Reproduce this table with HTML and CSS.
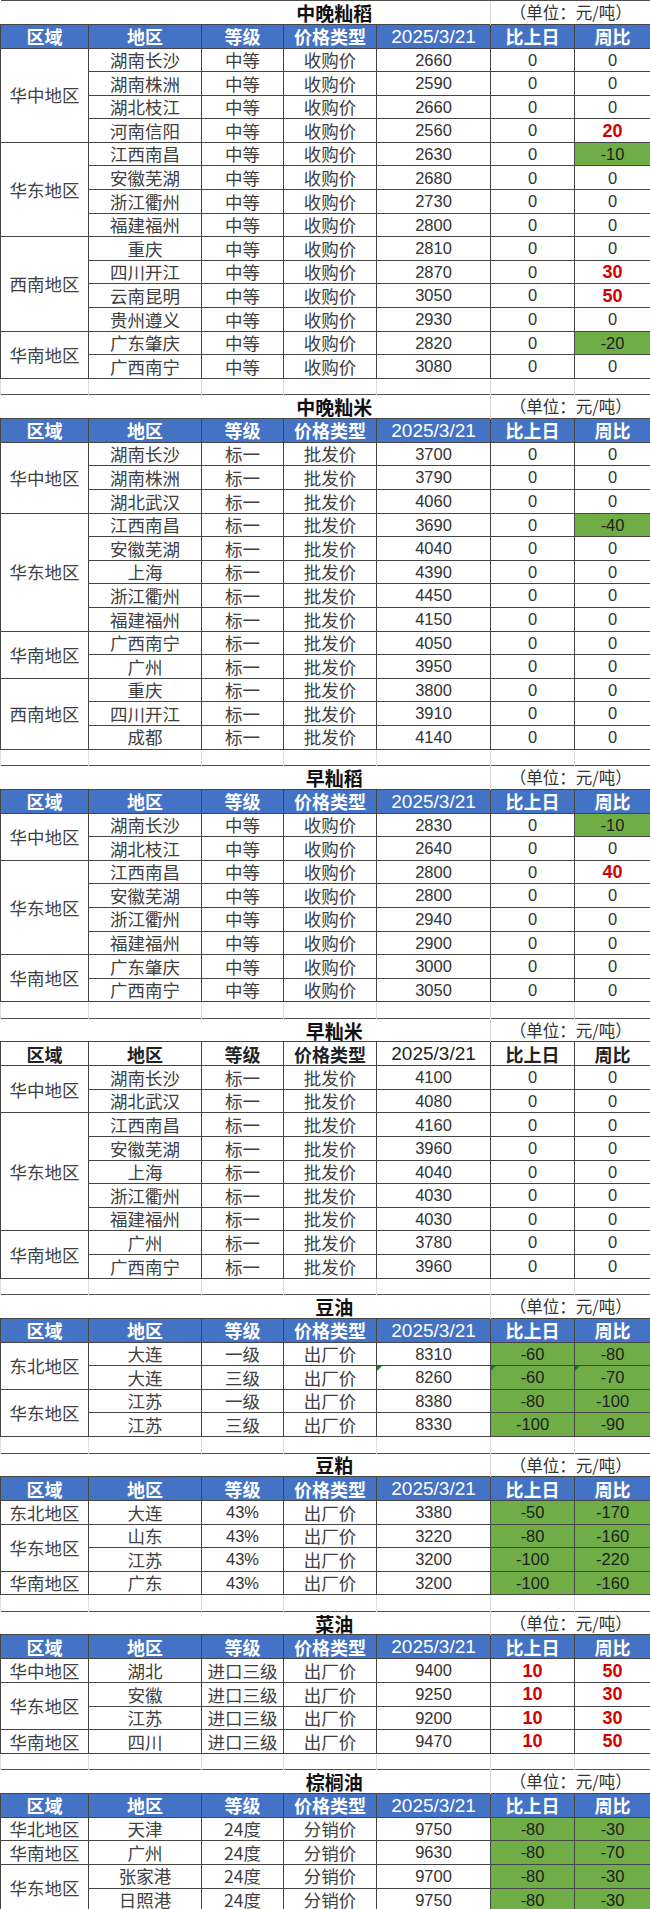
FILE: index.html
```html
<!DOCTYPE html>
<html lang="zh-CN">
<head>
<meta charset="utf-8">
<title>粮油价格</title>
<link rel="stylesheet" href="styles.css">
</head>
<body>
<table class="sheet">
<colgroup>
<col class="c-area"><col class="c-place"><col class="c-grade"><col class="c-type"><col class="c-price"><col class="c-day"><col class="c-week">
</colgroup>
<tbody>
<tr class="tt"><td colspan="5" class="ttl">中晚籼稻</td><td colspan="2" class="unit">（单位：元/吨）</td></tr>
<tr class="head"><td>区域</td><td>地区</td><td>等级</td><td>价格类型</td><td class="hd">2025/3/21</td><td>比上日</td><td>周比</td></tr>
<tr><td rowspan="4">华中地区</td><td>湖南长沙</td><td>中等</td><td>收购价</td><td class="n">2660</td><td class="n">0</td><td class="n">0</td></tr>
<tr><td>湖南株洲</td><td>中等</td><td>收购价</td><td class="n">2590</td><td class="n">0</td><td class="n">0</td></tr>
<tr><td>湖北枝江</td><td>中等</td><td>收购价</td><td class="n">2660</td><td class="n">0</td><td class="n">0</td></tr>
<tr><td>河南信阳</td><td>中等</td><td>收购价</td><td class="n">2560</td><td class="n">0</td><td class="n up">20</td></tr>
<tr><td rowspan="4">华东地区</td><td>江西南昌</td><td>中等</td><td>收购价</td><td class="n">2630</td><td class="n">0</td><td class="n dn">-10</td></tr>
<tr><td>安徽芜湖</td><td>中等</td><td>收购价</td><td class="n">2680</td><td class="n">0</td><td class="n">0</td></tr>
<tr><td>浙江衢州</td><td>中等</td><td>收购价</td><td class="n">2730</td><td class="n">0</td><td class="n">0</td></tr>
<tr><td>福建福州</td><td>中等</td><td>收购价</td><td class="n">2800</td><td class="n">0</td><td class="n">0</td></tr>
<tr><td rowspan="4">西南地区</td><td>重庆</td><td>中等</td><td>收购价</td><td class="n">2810</td><td class="n">0</td><td class="n">0</td></tr>
<tr><td>四川开江</td><td>中等</td><td>收购价</td><td class="n">2870</td><td class="n">0</td><td class="n up">30</td></tr>
<tr><td>云南昆明</td><td>中等</td><td>收购价</td><td class="n">3050</td><td class="n">0</td><td class="n up">50</td></tr>
<tr><td>贵州遵义</td><td>中等</td><td>收购价</td><td class="n">2930</td><td class="n">0</td><td class="n">0</td></tr>
<tr><td rowspan="2">华南地区</td><td>广东肇庆</td><td>中等</td><td>收购价</td><td class="n">2820</td><td class="n">0</td><td class="n dn">-20</td></tr>
<tr><td>广西南宁</td><td>中等</td><td>收购价</td><td class="n">3080</td><td class="n">0</td><td class="n">0</td></tr>
<tr class="gap"><td></td><td></td><td></td><td></td><td></td><td></td><td></td></tr>

<tr class="tt"><td colspan="5" class="ttl">中晚籼米</td><td colspan="2" class="unit">（单位：元/吨）</td></tr>
<tr class="head"><td>区域</td><td>地区</td><td>等级</td><td>价格类型</td><td class="hd">2025/3/21</td><td>比上日</td><td>周比</td></tr>
<tr><td rowspan="3">华中地区</td><td>湖南长沙</td><td>标一</td><td>批发价</td><td class="n">3700</td><td class="n">0</td><td class="n">0</td></tr>
<tr><td>湖南株洲</td><td>标一</td><td>批发价</td><td class="n">3790</td><td class="n">0</td><td class="n">0</td></tr>
<tr><td>湖北武汉</td><td>标一</td><td>批发价</td><td class="n">4060</td><td class="n">0</td><td class="n">0</td></tr>
<tr><td rowspan="5">华东地区</td><td>江西南昌</td><td>标一</td><td>批发价</td><td class="n">3690</td><td class="n">0</td><td class="n dn">-40</td></tr>
<tr><td>安徽芜湖</td><td>标一</td><td>批发价</td><td class="n">4040</td><td class="n">0</td><td class="n">0</td></tr>
<tr><td>上海</td><td>标一</td><td>批发价</td><td class="n">4390</td><td class="n">0</td><td class="n">0</td></tr>
<tr><td>浙江衢州</td><td>标一</td><td>批发价</td><td class="n">4450</td><td class="n">0</td><td class="n">0</td></tr>
<tr><td>福建福州</td><td>标一</td><td>批发价</td><td class="n">4150</td><td class="n">0</td><td class="n">0</td></tr>
<tr><td rowspan="2">华南地区</td><td>广西南宁</td><td>标一</td><td>批发价</td><td class="n">4050</td><td class="n">0</td><td class="n">0</td></tr>
<tr><td>广州</td><td>标一</td><td>批发价</td><td class="n">3950</td><td class="n">0</td><td class="n">0</td></tr>
<tr><td rowspan="3">西南地区</td><td>重庆</td><td>标一</td><td>批发价</td><td class="n">3800</td><td class="n">0</td><td class="n">0</td></tr>
<tr><td>四川开江</td><td>标一</td><td>批发价</td><td class="n">3910</td><td class="n">0</td><td class="n">0</td></tr>
<tr><td>成都</td><td>标一</td><td>批发价</td><td class="n">4140</td><td class="n">0</td><td class="n">0</td></tr>
<tr class="gap"><td></td><td></td><td></td><td></td><td></td><td></td><td></td></tr>

<tr class="tt"><td colspan="5" class="ttl">早籼稻</td><td colspan="2" class="unit">（单位：元/吨）</td></tr>
<tr class="head"><td>区域</td><td>地区</td><td>等级</td><td>价格类型</td><td class="hd">2025/3/21</td><td>比上日</td><td>周比</td></tr>
<tr><td rowspan="2">华中地区</td><td>湖南长沙</td><td>中等</td><td>收购价</td><td class="n">2830</td><td class="n">0</td><td class="n dn">-10</td></tr>
<tr><td>湖北枝江</td><td>中等</td><td>收购价</td><td class="n">2640</td><td class="n">0</td><td class="n">0</td></tr>
<tr><td rowspan="4">华东地区</td><td>江西南昌</td><td>中等</td><td>收购价</td><td class="n">2800</td><td class="n">0</td><td class="n up">40</td></tr>
<tr><td>安徽芜湖</td><td>中等</td><td>收购价</td><td class="n">2800</td><td class="n">0</td><td class="n">0</td></tr>
<tr><td>浙江衢州</td><td>中等</td><td>收购价</td><td class="n">2940</td><td class="n">0</td><td class="n">0</td></tr>
<tr><td>福建福州</td><td>中等</td><td>收购价</td><td class="n">2900</td><td class="n">0</td><td class="n">0</td></tr>
<tr><td rowspan="2">华南地区</td><td>广东肇庆</td><td>中等</td><td>收购价</td><td class="n">3000</td><td class="n">0</td><td class="n">0</td></tr>
<tr><td>广西南宁</td><td>中等</td><td>收购价</td><td class="n">3050</td><td class="n">0</td><td class="n">0</td></tr>
<tr class="gap"><td></td><td></td><td></td><td></td><td></td><td></td><td></td></tr>

<tr class="tt"><td colspan="5" class="ttl">早籼米</td><td colspan="2" class="unit">（单位：元/吨）</td></tr>
<tr class="head plain"><td>区域</td><td>地区</td><td>等级</td><td>价格类型</td><td class="hd">2025/3/21</td><td>比上日</td><td>周比</td></tr>
<tr><td rowspan="2">华中地区</td><td>湖南长沙</td><td>标一</td><td>批发价</td><td class="n">4100</td><td class="n">0</td><td class="n">0</td></tr>
<tr><td>湖北武汉</td><td>标一</td><td>批发价</td><td class="n">4080</td><td class="n">0</td><td class="n">0</td></tr>
<tr><td rowspan="5">华东地区</td><td>江西南昌</td><td>标一</td><td>批发价</td><td class="n">4160</td><td class="n">0</td><td class="n">0</td></tr>
<tr><td>安徽芜湖</td><td>标一</td><td>批发价</td><td class="n">3960</td><td class="n">0</td><td class="n">0</td></tr>
<tr><td>上海</td><td>标一</td><td>批发价</td><td class="n">4040</td><td class="n">0</td><td class="n">0</td></tr>
<tr><td>浙江衢州</td><td>标一</td><td>批发价</td><td class="n">4030</td><td class="n">0</td><td class="n">0</td></tr>
<tr><td>福建福州</td><td>标一</td><td>批发价</td><td class="n">4030</td><td class="n">0</td><td class="n">0</td></tr>
<tr><td rowspan="2">华南地区</td><td>广州</td><td>标一</td><td>批发价</td><td class="n">3780</td><td class="n">0</td><td class="n">0</td></tr>
<tr><td>广西南宁</td><td>标一</td><td>批发价</td><td class="n">3960</td><td class="n">0</td><td class="n">0</td></tr>
<tr class="gap"><td></td><td></td><td></td><td></td><td></td><td></td><td></td></tr>

<tr class="tt"><td colspan="5" class="ttl">豆油</td><td colspan="2" class="unit">（单位：元/吨）</td></tr>
<tr class="head"><td>区域</td><td>地区</td><td>等级</td><td>价格类型</td><td class="hd">2025/3/21</td><td>比上日</td><td>周比</td></tr>
<tr><td rowspan="2">东北地区</td><td>大连</td><td>一级</td><td>出厂价</td><td class="n">8310</td><td class="n dn">-60</td><td class="n dn">-80</td></tr>
<tr><td>大连</td><td>三级</td><td>出厂价</td><td class="n tri">8260</td><td class="n dn tri">-60</td><td class="n dn tri">-70</td></tr>
<tr><td rowspan="2">华东地区</td><td>江苏</td><td>一级</td><td>出厂价</td><td class="n">8380</td><td class="n dn">-80</td><td class="n dn">-100</td></tr>
<tr><td>江苏</td><td>三级</td><td>出厂价</td><td class="n">8330</td><td class="n dn">-100</td><td class="n dn">-90</td></tr>
<tr class="gap"><td></td><td></td><td></td><td></td><td></td><td></td><td></td></tr>

<tr class="tt"><td colspan="5" class="ttl">豆粕</td><td colspan="2" class="unit">（单位：元/吨）</td></tr>
<tr class="head"><td>区域</td><td>地区</td><td>等级</td><td>价格类型</td><td class="hd">2025/3/21</td><td>比上日</td><td>周比</td></tr>
<tr><td>东北地区</td><td>大连</td><td class="n">43%</td><td>出厂价</td><td class="n">3380</td><td class="n dn">-50</td><td class="n dn">-170</td></tr>
<tr><td rowspan="2">华东地区</td><td>山东</td><td class="n">43%</td><td>出厂价</td><td class="n">3220</td><td class="n dn">-80</td><td class="n dn">-160</td></tr>
<tr><td>江苏</td><td class="n">43%</td><td>出厂价</td><td class="n">3200</td><td class="n dn">-100</td><td class="n dn">-220</td></tr>
<tr><td>华南地区</td><td>广东</td><td class="n">43%</td><td>出厂价</td><td class="n">3200</td><td class="n dn">-100</td><td class="n dn">-160</td></tr>
<tr class="gap"><td></td><td></td><td></td><td></td><td></td><td></td><td></td></tr>

<tr class="tt"><td colspan="5" class="ttl">菜油</td><td colspan="2" class="unit">（单位：元/吨）</td></tr>
<tr class="head"><td>区域</td><td>地区</td><td>等级</td><td>价格类型</td><td class="hd">2025/3/21</td><td>比上日</td><td>周比</td></tr>
<tr><td>华中地区</td><td>湖北</td><td>进口三级</td><td>出厂价</td><td class="n">9400</td><td class="n up">10</td><td class="n up">50</td></tr>
<tr><td rowspan="2">华东地区</td><td>安徽</td><td>进口三级</td><td>出厂价</td><td class="n">9250</td><td class="n up">10</td><td class="n up">30</td></tr>
<tr><td>江苏</td><td>进口三级</td><td>出厂价</td><td class="n">9200</td><td class="n up">10</td><td class="n up">30</td></tr>
<tr><td>华南地区</td><td>四川</td><td>进口三级</td><td>出厂价</td><td class="n">9470</td><td class="n up">10</td><td class="n up">50</td></tr>
<tr class="gap"><td></td><td></td><td></td><td></td><td></td><td></td><td></td></tr>

<tr class="tt"><td colspan="5" class="ttl">棕榈油</td><td colspan="2" class="unit">（单位：元/吨）</td></tr>
<tr class="head"><td>区域</td><td>地区</td><td>等级</td><td>价格类型</td><td class="hd">2025/3/21</td><td>比上日</td><td>周比</td></tr>
<tr><td>华北地区</td><td>天津</td><td>24度</td><td>分销价</td><td class="n">9750</td><td class="n dn">-80</td><td class="n dn">-30</td></tr>
<tr><td>华南地区</td><td>广州</td><td>24度</td><td>分销价</td><td class="n">9630</td><td class="n dn">-80</td><td class="n dn">-70</td></tr>
<tr><td rowspan="2">华东地区</td><td>张家港</td><td>24度</td><td>分销价</td><td class="n">9700</td><td class="n dn">-80</td><td class="n dn">-30</td></tr>
<tr><td>日照港</td><td>24度</td><td>分销价</td><td class="n">9750</td><td class="n dn">-80</td><td class="n dn">-30</td></tr>
</tbody>
</table>
</body>
</html>
```

FILE: styles.css
```css
html, body {
  margin: 0;
  padding: 0;
  background: #ffffff;
}

.sheet {
  width: 650px;
  border-collapse: collapse;
  table-layout: fixed;
  font-family: "Noto Sans CJK SC", "Noto Sans", sans-serif;
  color: #404040;
}

.c-area { width: 88px; }
.c-place { width: 113px; }
.c-grade { width: 82px; }
.c-type { width: 93px; }
.c-price { width: 114px; }
.c-day { width: 84px; }
.c-week { width: 76px; }

.sheet td {
  padding: 0;
  height: 22.6px;
  text-align: center;
  vertical-align: middle;
  border: 1px solid #454545;
  font-size: 17.5px;
  line-height: 1;
  white-space: nowrap;
}

.sheet .tt td {
  height: 22.5px;
  border: none;
  border-top: 1px solid #505050;
  color: #333;
}

.sheet .tt .ttl {
  padding-left: 178px;
  font-size: 19px;
  font-weight: bold;
  color: #111;
}

.sheet .tt .unit {
  border-left: 1px solid #d6d6d6;
  font-size: 16.5px;
  color: #333;
}

.sheet .head td {
  height: 23px;
  background: #4472c4;
  color: #ffffff;
  font-weight: bold;
  font-size: 18px;
}

.sheet .head .hd {
  font-family: "Liberation Sans", Arial, sans-serif;
  font-weight: normal;
  font-size: 19px;
}

.sheet .head.plain td {
  background: #ffffff;
  color: #222;
}

.sheet .n {
  font-family: "Liberation Sans", Arial, sans-serif;
  font-size: 16.5px;
  color: #333;
}

.sheet .up {
  color: #d40000;
  font-weight: bold;
  font-size: 18px;
}

.sheet .dn {
  background: #70ad47;
  color: #1e1e1e;
}

.sheet .tri {
  position: relative;
}

.sheet .tri::before {
  content: "";
  position: absolute;
  left: 0;
  top: 0;
  border-top: 5px solid #1f7a2e;
  border-right: 5px solid transparent;
}

.sheet .gap td {
  height: 15.5px;
  border-top: none;
  border-bottom: none;
  border-left: 1px solid #dcdcdc;
  border-right: 1px solid #dcdcdc;
}
```
